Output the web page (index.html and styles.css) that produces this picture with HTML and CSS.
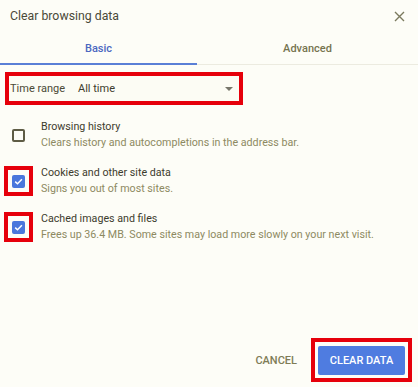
FILE: index.html
```html
<!DOCTYPE html>
<html lang="en">
<head>
<meta charset="utf-8">
<title>Clear browsing data</title>
<link rel="stylesheet" href="styles.css">
</head>
<body>
<div class="dialog">
  <div class="header">
    <span class="title">Clear browsing data</span>
    <svg class="close" width="11" height="11" viewBox="0 0 11 11"><path d="M1 1 L10 10 M10 1 L1 10" stroke="#7b7a5e" stroke-width="1.4" fill="none"/></svg>
  </div>
  <div class="tabs">
    <div class="tab active">Basic</div>
    <div class="tab">Advanced</div>
  </div>
  <div class="range mark">
    <span class="range-label">Time range</span>
    <span class="range-value">All time</span>
    <span class="arrow"></span>
  </div>
  <div class="items">
    <div class="item">
      <div class="cbcell"><span class="cb"></span></div>
      <div class="text">
        <div class="name">Browsing history</div>
        <div class="desc">Clears history and autocompletions in the address bar.</div>
      </div>
    </div>
    <div class="item">
      <div class="cbcell mark"><span class="cb checked"><svg width="13" height="13" viewBox="0 0 13 13"><path d="M3.2 6.6 L5.5 8.8 L9.9 4.3" stroke="#fff" stroke-width="1.5" fill="none"/></svg></span></div>
      <div class="text">
        <div class="name">Cookies and other site data</div>
        <div class="desc">Signs you out of most sites.</div>
      </div>
    </div>
    <div class="item">
      <div class="cbcell mark"><span class="cb checked"><svg width="13" height="13" viewBox="0 0 13 13"><path d="M3.2 6.6 L5.5 8.8 L9.9 4.3" stroke="#fff" stroke-width="1.5" fill="none"/></svg></span></div>
      <div class="text">
        <div class="name">Cached images and files</div>
        <div class="desc">Frees up 36.4 MB. Some sites may load more slowly on your next visit.</div>
      </div>
    </div>
  </div>
  <div class="footer">
    <span class="cancel">CANCEL</span>
    <div class="btnwrap mark"><span class="clear">CLEAR DATA</span></div>
  </div>
</div>
</body>
</html>
```
FILE: styles.css
```css
html, body {
  margin: 0;
  padding: 0;
  background: #fdfdf7;
}
body {
  font-family: Roboto, "Liberation Sans", sans-serif;
  color: #3d3c2d;
}
.dialog {
  height: 387px;
  display: flex;
  flex-direction: column;
  box-sizing: border-box;
}
.header {
  height: 32px;
  display: flex;
  align-items: center;
  justify-content: space-between;
  padding: 0 13px 0 10px;
}
.title {
  font-size: 12.3px;
  color: #4a4938;
}
.close {
  display: block;
}
.tabs {
  display: grid;
  grid-template-columns: 197px 1fr;
  height: 33px;
  border-bottom: 1px solid #ecebe0;
  box-sizing: border-box;
}
.tab {
  display: flex;
  align-items: center;
  justify-content: center;
  font-size: 11px;
  font-weight: 500;
  color: #76744f;
  box-sizing: border-box;
}
.tab.active {
  color: #4b67c0;
  border-bottom: 2px solid #5a7fd6;
  margin-bottom: -1px;
  padding-top: 1px;
}
.mark {
  border: 4px solid #e6000b;
}
.range {
  margin: 7px 0 0 5px;
  width: 238px;
  height: 33px;
  box-sizing: border-box;
  display: flex;
  align-items: center;
  font-size: 11px;
  padding: 0 6px 0 1px;
  background: #fcfcf4;
}
.range-label {
  width: 68px;
  color: #4b4a36;
}
.range-value {
  flex: 1;
  color: #3d3c2d;
}
.arrow {
  width: 0;
  height: 0;
  border-left: 4px solid transparent;
  border-right: 4px solid transparent;
  border-top: 4px solid #77766a;
}
.items {
  margin-top: 14px;
  display: flex;
  flex-direction: column;
  gap: 14px;
}
.item {
  display: flex;
  align-items: center;
  height: 32px;
}
.cbcell {
  margin-left: 4px;
  width: 29px;
  height: 30px;
  box-sizing: border-box;
  border: 4px solid transparent;
  display: flex;
  align-items: center;
  justify-content: center;
}
.cbcell.mark {
  border-color: #e6000b;
}
.cb {
  width: 13px;
  height: 13px;
  box-sizing: border-box;
  border: 2px solid #5e5c45;
  border-radius: 2px;
  display: block;
}
.cb.checked {
  border: none;
  background: #4a77dc;
}
.cb svg {
  display: block;
}
.text {
  margin-left: 8px;
  font-size: 10.7px;
  line-height: 16px;
}
.name {
  color: #3d3c2d;
}
.desc {
  color: #8d8a62;
}
.footer {
  margin-top: auto;
  margin-bottom: 5px;
  display: flex;
  align-items: center;
  justify-content: flex-end;
  padding-right: 6px;
}
.cancel {
  font-size: 11px;
  font-weight: 500;
  color: #7f7c56;
  margin-right: 14px;
}
.btnwrap {
  padding: 4px 3px 3px 3px;
  display: flex;
}
.clear {
  width: 87px;
  height: 29px;
  display: flex;
  align-items: center;
  justify-content: center;
  background: #4f7ce0;
  border-radius: 2px;
  color: #fff;
  font-size: 11px;
  font-weight: 500;
}
```
